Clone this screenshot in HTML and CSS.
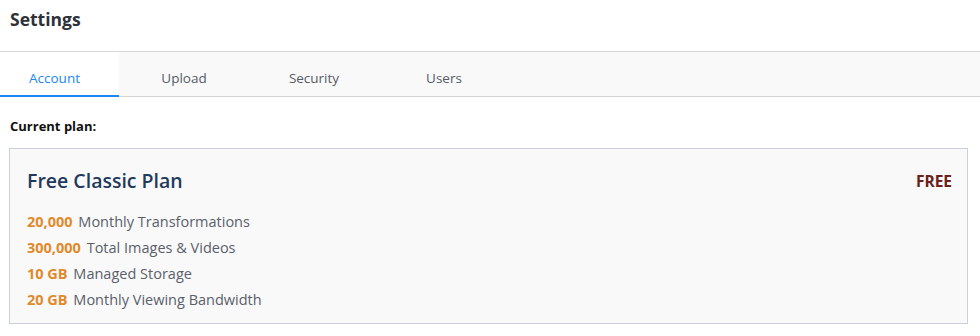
FILE: index.html
```html
<!DOCTYPE html>
<html lang="en">
<head>
    <meta charset="UTF-8">
    <meta name="viewport" content="width=device-width, initial-scale=1.0">
    <title>Settings</title>
    <link rel="stylesheet" href="styles.css">
</head>
<body>
    <header class="page-header">
        <h1>Settings</h1>
    </header>

    <nav class="tabs">
        <a href="#" class="tab active">Account</a>
        <a href="#" class="tab">Upload</a>
        <a href="#" class="tab">Security</a>
        <a href="#" class="tab">Users</a>
    </nav>

    <main class="content">
        <h2 class="section-label">Current plan:</h2>

        <div class="plan-card">
            <div class="plan-head">
                <h3 class="plan-name">Free Classic Plan</h3>
                <span class="plan-price">FREE</span>
            </div>
            <ul class="plan-limits">
                <li><strong>20,000</strong> Monthly Transformations</li>
                <li><strong>300,000</strong> Total Images &amp; Videos</li>
                <li><strong>10 GB</strong> Managed Storage</li>
                <li><strong>20 GB</strong> Monthly Viewing Bandwidth</li>
            </ul>
        </div>
    </main>
</body>
</html>
```

FILE: styles.css
```css
* {
    margin: 0;
    padding: 0;
    box-sizing: border-box;
}

body {
    font-family: 'Open Sans', 'Noto Sans', sans-serif;
    background: white;
    color: #333;
    width: 980px;
}

.page-header {
    height: 52px;
    padding: 7px 10px 0;
    border-bottom: 1px solid #d9d9d9;
}

.page-header h1 {
    font-size: 17.5px;
    font-weight: 700;
    color: #2e3138;
}

.tabs {
    display: flex;
    height: 45px;
    background: #f9f9f9;
    border-bottom: 1px solid #d3d3d3;
}

.tab {
    width: 130px;
    display: flex;
    align-items: center;
    justify-content: center;
    font-size: 13.5px;
    color: #555b66;
    text-decoration: none;
    padding-top: 8px;
}

.tab.active {
    width: 119px;
    padding-right: 10px;
    background: white;
    color: #1a87f5;
    border-bottom: 2px solid #1a87f5;
    margin-bottom: -1px;
}

.content {
    padding: 20px 12px 0 9px;
}

.section-label {
    font-size: 13px;
    font-weight: 700;
    color: #111;
    margin-left: 1px;
    margin-bottom: 13px;
}

.plan-card {
    background: #f9f9f9;
    border: 1px solid #c9d0dc;
    padding: 18px 15px 15px 17px;
    height: 176px;
}

.plan-head {
    display: flex;
    justify-content: space-between;
    align-items: center;
    margin-bottom: 15px;
}

.plan-name {
    font-size: 19.5px;
    font-weight: 600;
    color: #1f3a5c;
}

.plan-price {
    font-size: 15.5px;
    font-weight: 700;
    color: #6b2019;
}

.plan-limits {
    list-style: none;
}

.plan-limits li {
    font-size: 14.5px;
    line-height: 26px;
    color: #5a5f6b;
}

.plan-limits strong {
    color: #e08a2c;
    font-weight: 700;
    margin-right: 2px;
}
```
